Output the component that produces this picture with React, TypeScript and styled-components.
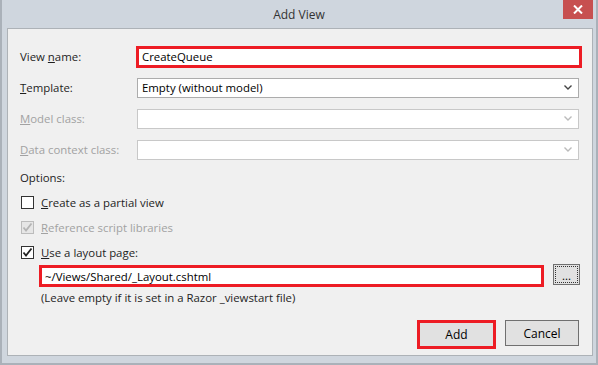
import React from "react";
import styled, { createGlobalStyle } from "styled-components";

const GlobalStyle = createGlobalStyle`
  html, body {
    margin: 0;
    padding: 0;
    background: #cfd6de;
  }
  body {
    font-family: "Open Sans", "Noto Sans", "Liberation Sans", sans-serif;
  }
`;

const Window = styled.div`
  width: 598px;
  height: 365px;
  box-sizing: border-box;
  background: #cfd6de;
  border-left: 2px solid #aab1b9;
  border-right: 2px solid #aab1b9;
  border-bottom: 2px solid #aab1b9;
  display: flex;
  flex-direction: column;
`;

const TitleBar = styled.div`
  height: 28px;
  position: relative;
  display: flex;
  align-items: center;
  justify-content: center;
  font-size: 12px;
  color: #333;
`;

const CloseButton = styled.div`
  position: absolute;
  top: 0;
  right: 3px;
  width: 30px;
  height: 19px;
  background: #c75050;
  display: flex;
  align-items: center;
  justify-content: center;
`;

const Panel = styled.div`
  flex: 1;
  margin: 0 3px 7px 5px;
  background: #f0f0f0;
  border: 1px solid #adb2b7;
  padding: 12px 13px 6px 12px;
  display: flex;
  flex-direction: column;
  font-size: 11.4px;
  color: #1e1e1e;
`;

const FieldRow = styled.div`
  height: 31px;
  display: grid;
  grid-template-columns: 117px 1fr;
  align-items: center;
`;

const Label = styled.div<{ $disabled?: boolean }>`
  color: ${(p) => (p.$disabled ? "#a2a2a2" : "#1e1e1e")};
  white-space: nowrap;
`;

const NameInput = styled.div`
  height: 22px;
  box-sizing: border-box;
  margin: 0 -3px 0 -1px;
  border: 3px solid #ed1c24;
  background: #fff;
  display: flex;
  align-items: center;
  padding-left: 3px;
  color: #000;
`;

const Select = styled.div<{ $disabled?: boolean }>`
  height: 20px;
  box-sizing: border-box;
  border: 1px solid ${(p) => (p.$disabled ? "#c8c8c8" : "#acacac")};
  background: #fff;
  display: flex;
  align-items: center;
  justify-content: space-between;
  padding: 0 6px 0 4px;
  color: #000;
`;

const Line = styled.div<{ $h: number }>`
  height: ${(p) => p.$h}px;
  display: flex;
  align-items: center;
  white-space: nowrap;
`;

const CheckRow = styled(Line)<{ $disabled?: boolean }>`
  gap: 7px;
  padding-left: 1px;
  color: ${(p) => (p.$disabled ? "#a2a2a2" : "#1e1e1e")};
`;

const Box = styled.div<{ $disabled?: boolean }>`
  width: 13px;
  height: 13px;
  box-sizing: border-box;
  border: 1px solid ${(p) => (p.$disabled ? "#bcbcbc" : "#333")};
  background: ${(p) => (p.$disabled ? "#e6e6e6" : "#fff")};
  display: flex;
  align-items: center;
  justify-content: center;
`;

const PathRow = styled.div`
  display: flex;
  align-items: flex-start;
  gap: 9px;
  padding-left: 19px;
  margin-top: 0;
  height: 24px;
`;

const PathInput = styled.div`
  flex: 1;
  height: 22px;
  margin-top: 1px;
  box-sizing: border-box;
  border: 3px solid #ed1c24;
  background: #fff;
  display: flex;
  align-items: center;
  padding-left: 3px;
  color: #000;
`;

const BrowseButton = styled.div`
  width: 27px;
  height: 21px;
  box-sizing: border-box;
  border: 1px solid #707070;
  background: #e1e1e1;
  padding: 1px;
  margin-right: -1px;
`;

const FocusRect = styled.div`
  height: 100%;
  box-sizing: border-box;
  border: 1px dotted #333;
  display: flex;
  align-items: flex-end;
  justify-content: center;
  line-height: 12px;
  color: #000;
`;

const Hint = styled(Line)`
  padding-left: 21px;
`;

const Buttons = styled.div`
  margin-top: auto;
  display: flex;
  justify-content: flex-end;
  align-items: flex-start;
  gap: 9px;
`;

const Button = styled.div<{ $highlight?: boolean }>`
  width: ${(p) => (p.$highlight ? "79px" : "74px")};
  height: ${(p) => (p.$highlight ? "29px" : "26px")};
  box-sizing: border-box;
  border: ${(p) => (p.$highlight ? "3px solid #ed1c24" : "1px solid #707070")};
  background: #e1e1e1;
  display: flex;
  align-items: center;
  justify-content: center;
  font-size: 12px;
  color: #000;
`;

const Chevron = ({ color }: { color: string }) => (
  <svg width="8" height="5" viewBox="0 0 8 5">
    <polyline points="0.5,0.5 4,4 7.5,0.5" fill="none" stroke={color} strokeWidth="1.4" />
  </svg>
);

const Check = ({ color }: { color: string }) => (
  <svg width="11" height="11" viewBox="0 0 11 11">
    <polyline points="1.5,5.5 4,8.5 9.5,1.5" fill="none" stroke={color} strokeWidth="1.8" />
  </svg>
);

export default function App() {
  return (
    <>
      <GlobalStyle />
      <Window>
        <TitleBar>
          Add View
          <CloseButton>
            <svg width="10" height="9" viewBox="0 0 10 9">
              <path d="M1 0.5 L9 8.5 M9 0.5 L1 8.5" stroke="#fff" strokeWidth="2" />
            </svg>
          </CloseButton>
        </TitleBar>
        <Panel>
          <FieldRow>
            <Label>
              View <u>n</u>ame:
            </Label>
            <NameInput>CreateQueue</NameInput>
          </FieldRow>
          <FieldRow>
            <Label>
              <u>T</u>emplate:
            </Label>
            <Select>
              Empty (without model)
              <Chevron color="#444" />
            </Select>
          </FieldRow>
          <FieldRow>
            <Label $disabled>
              <u>M</u>odel class:
            </Label>
            <Select $disabled>
              <span />
              <Chevron color="#bbb" />
            </Select>
          </FieldRow>
          <FieldRow>
            <Label $disabled>
              <u>D</u>ata context class:
            </Label>
            <Select $disabled>
              <span />
              <Chevron color="#bbb" />
            </Select>
          </FieldRow>
          <Line $h={25}>Options:</Line>
          <CheckRow $h={25}>
            <Box />
            <span>
              <u>C</u>reate as a partial view
            </span>
          </CheckRow>
          <CheckRow $h={25} $disabled>
            <Box $disabled>
              <Check color="#b4b4b4" />
            </Box>
            <span>
              <u>R</u>eference script libraries
            </span>
          </CheckRow>
          <CheckRow $h={24}>
            <Box>
              <Check color="#222" />
            </Box>
            <span>
              <u>U</u>se a layout page:
            </span>
          </CheckRow>
          <PathRow>
            <PathInput>~/Views/Shared/_Layout.cshtml</PathInput>
            <BrowseButton>
              <FocusRect>...</FocusRect>
            </BrowseButton>
          </PathRow>
          <Hint $h={18}>(Leave empty if it is set in a Razor _viewstart file)</Hint>
          <Buttons>
            <Button $highlight>Add</Button>
            <Button>Cancel</Button>
          </Buttons>
        </Panel>
      </Window>
    </>
  );
}
